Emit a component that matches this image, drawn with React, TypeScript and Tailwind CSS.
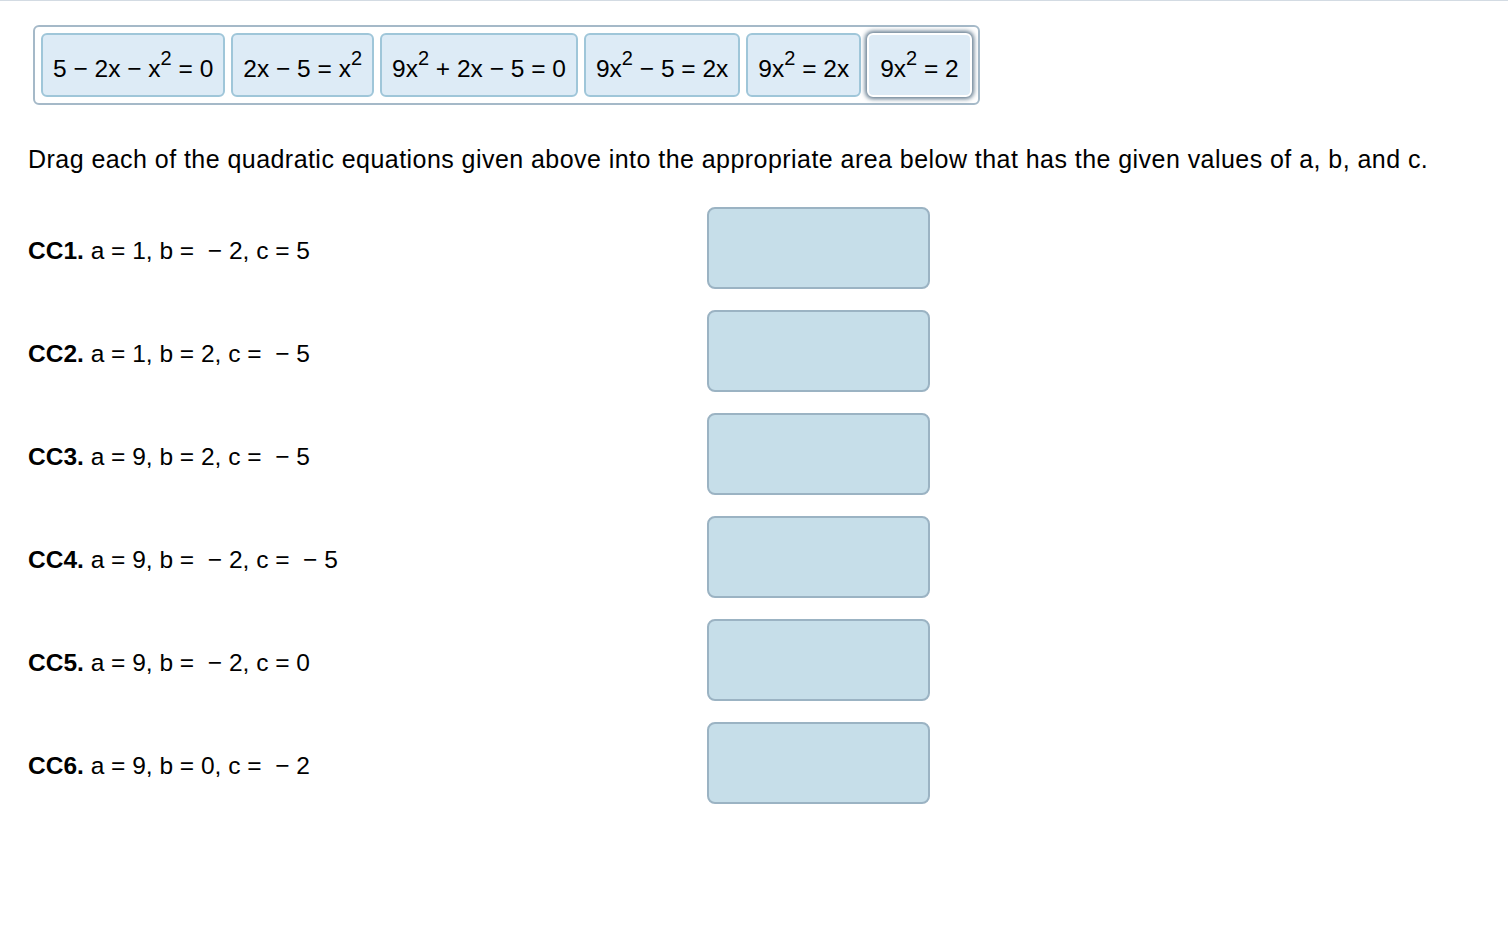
import React from 'react';

const font = { fontFamily: '"Liberation Sans", Arial, Helvetica, sans-serif' };

type Part = string | { sup: string };

const tiles: Part[][] = [
  ['5 − 2x − x', { sup: '2' }, ' = 0'],
  ['2x − 5 = x', { sup: '2' }],
  ['9x', { sup: '2' }, ' + 2x − 5 = 0'],
  ['9x', { sup: '2' }, ' − 5 = 2x'],
  ['9x', { sup: '2' }, ' = 2x'],
  ['9x', { sup: '2' }, ' = 2'],
];

const rows = [
  { label: 'CC1.', text: 'a = 1, b =  − 2, c = 5' },
  { label: 'CC2.', text: 'a = 1, b = 2, c =  − 5' },
  { label: 'CC3.', text: 'a = 9, b = 2, c =  − 5' },
  { label: 'CC4.', text: 'a = 9, b =  − 2, c =  − 5' },
  { label: 'CC5.', text: 'a = 9, b =  − 2, c = 0' },
  { label: 'CC6.', text: 'a = 9, b = 0, c =  − 2' },
];

function Equation({ parts }: { parts: Part[] }) {
  return (
    <span className="whitespace-pre">
      {parts.map((p, i) =>
        typeof p === 'string' ? (
          <span key={i}>{p}</span>
        ) : (
          <span key={i} className="relative -top-[12px] text-[20px]">
            {p.sup}
          </span>
        )
      )}
    </span>
  );
}

export default function App() {
  return (
    <div className="min-h-screen bg-white text-black border-t border-[#d3dbe3]" style={font}>
      <div className="pl-[33px] pt-[24px]">
        <div className="inline-flex gap-[6px] rounded-[6px] border-2 border-[#a5b9c8] bg-white p-[6px]">
          {tiles.map((t, i) => {
            const selected = i === tiles.length - 1;
            return (
              <div
                key={i}
                className={
                  selected
                    ? 'flex h-[64px] items-center rounded-[6px] border-2 border-white bg-[#ddebf6] px-[11px] text-[24.5px] shadow-[0_0_4px_2px_rgba(60,90,115,0.8)]'
                    : 'flex h-[64px] items-center rounded-[6px] border-2 border-[#9fc6d9] bg-[#ddebf6] px-[10px] text-[24.5px]'
                }
              >
                <span className="pt-[8px]">
                  <Equation parts={t} />
                </span>
              </div>
            );
          })}
        </div>
      </div>

      <p className="mt-[40px] pl-[28px] text-[25px] leading-[28px] tracking-[0.45px]">
        Drag each of the quadratic equations given above into the appropriate area below that has the given values of a, b, and c.
      </p>

      <div className="mt-[34px] flex flex-col gap-[21px] pl-[28px]">
        {rows.map((r) => (
          <div key={r.label} className="flex items-center">
            <div className="w-[679px] pt-[6px] text-[24.5px] whitespace-pre">
              <span className="font-bold">{r.label}</span> {r.text}
            </div>
            <div className="h-[82px] w-[223px] rounded-[8px] border-2 border-[#9bb3c3] bg-[#c6dee9]" />
          </div>
        ))}
      </div>
    </div>
  );
}
